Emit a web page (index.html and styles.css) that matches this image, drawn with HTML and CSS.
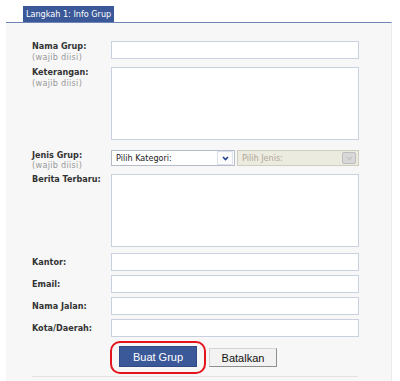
FILE: index.html
```html
<!DOCTYPE html>
<html lang="id">
<head>
    <meta charset="UTF-8">
    <title>Buat Grup - Langkah 1</title>
    <link rel="stylesheet" href="styles.css">
</head>
<body>
    <div class="page">
        <div class="tabs">
            <span class="tab">Langkah 1: Info Grup</span>
        </div>
        <div class="panel">
            <div class="field">
                <div class="label">Nama Grup:<span class="req">(wajib diisi)</span></div>
                <input class="text-input" type="text">
            </div>
            <div class="field field--area">
                <div class="label">Keterangan:<span class="req">(wajib diisi)</span></div>
                <textarea class="text-area"></textarea>
            </div>
            <div class="field field--select">
                <div class="label">Jenis Grup:<span class="req">(wajib diisi)</span></div>
                <div class="selects">
                    <div class="select">
                        <span class="select-text">Pilih Kategori:</span>
                        <span class="select-arrow">
                            <svg width="7" height="5" viewBox="0 0 7 5"><path d="M1 1l2.5 2.5L6 1" fill="none" stroke="#1f3f8f" stroke-width="1.6"/></svg>
                        </span>
                    </div>
                    <div class="select select--disabled">
                        <span class="select-text">Pilih Jenis:</span>
                        <span class="select-arrow">
                            <svg width="7" height="5" viewBox="0 0 7 5"><path d="M1 1l2.5 2.5L6 1" fill="none" stroke="#c4c4c4" stroke-width="1.4"/></svg>
                        </span>
                    </div>
                </div>
            </div>
            <div class="field field--area field--news">
                <div class="label">Berita Terbaru:</div>
                <textarea class="text-area"></textarea>
            </div>
            <div class="field field--single">
                <div class="label">Kantor:</div>
                <input class="text-input" type="text">
            </div>
            <div class="field field--single">
                <div class="label">Email:</div>
                <input class="text-input" type="text">
            </div>
            <div class="field field--single">
                <div class="label">Nama Jalan:</div>
                <input class="text-input" type="text">
            </div>
            <div class="field field--single">
                <div class="label">Kota/Daerah:</div>
                <input class="text-input" type="text">
            </div>
            <div class="actions">
                <span class="highlight">
                    <button class="btn btn-primary" type="button">Buat Grup</button>
                </span>
                <button class="btn btn-cancel" type="button">Batalkan</button>
            </div>
            <div class="panel-foot"></div>
        </div>
    </div>
</body>
</html>
```

FILE: styles.css
```css
body {
    margin: 0;
    background: #fff;
    font-family: "DejaVu Sans Condensed", "DejaVu Sans", sans-serif;
    font-size: 9px;
    color: #333;
}
.page {
    width: 386px;
    padding: 6px 0 0 6px;
}
.tabs {
    padding-left: 17px;
    height: 16px;
}
.tab {
    display: inline-block;
    height: 16px;
    line-height: 16px;
    padding: 0 3px;
    background: #3b5998;
    color: #fff;
    font-size: 9px;
}
.panel {
    border-top: 1px solid #6d84b4;
    border-right: 1px solid #ebebeb;
    background: #f7f7f7;
    padding: 18px 0 0 26px;
    height: 360px;
    box-sizing: border-box;
}
.field {
    display: flex;
    margin-bottom: 4px;
}
.field--area {
    margin-bottom: 8px;
}
.field--news {
    margin-bottom: 6px;
}
.label {
    width: 79px;
    flex: none;
    font-weight: bold;
    line-height: 11px;
    color: #333;
}
.field--single .label {
    line-height: 18px;
}
.req {
    display: block;
    font-weight: normal;
    color: #999;
    letter-spacing: 0.3px;
}
.text-input,
.text-area {
    display: block;
    box-sizing: border-box;
    width: 248px;
    margin: 0;
    padding: 1px 3px;
    border: 1px solid #c9d0df;
    background: #fff;
    font: inherit;
}
.text-input {
    height: 18px;
}
.text-area {
    height: 73px;
    resize: none;
}
.field--select .label {
    padding-top: 2px;
    line-height: 10px;
}
.selects {
    display: flex;
    gap: 2px;
    padding-top: 2px;
}
.select {
    display: flex;
    align-items: center;
    justify-content: space-between;
    box-sizing: border-box;
    width: 124px;
    height: 16px;
    border: 1px solid #b5bcc7;
    background: #fff;
    color: #222;
}
.select-text {
    padding-left: 4px;
}
.select-arrow {
    display: flex;
    align-items: center;
    justify-content: center;
    box-sizing: border-box;
    width: 16px;
    height: 14px;
    margin-right: 1px;
    border: 1px solid #dde3ec;
    background: #fcfcfc;
}
.select--disabled {
    width: 122px;
    background: #ecebdf;
    border-color: #cfcdc0;
    color: #aca899;
}
.select--disabled .select-arrow {
    width: 14px;
    height: 12px;
    margin-right: 2px;
    border: 1px solid #bdbdbd;
    border-radius: 2px;
    background: #d8d8d8;
}
.actions {
    display: flex;
    align-items: center;
    margin: 2px 0 0 78px;
}
.highlight {
    display: inline-block;
    padding: 3px 7px 5px;
    border: 2px solid #e3141b;
    border-radius: 10px;
}
.btn {
    display: block;
    margin: 0;
    font-family: "Liberation Sans", Arial, sans-serif;
    font-size: 11px;
    cursor: pointer;
}
.btn-primary {
    width: 78px;
    height: 21px;
    border: 1px solid #2f4a85;
    background: #3b5998;
    color: #fff;
}
.btn-cancel {
    width: 68px;
    height: 19px;
    margin-left: 3px;
    border: 1px solid #d4d4d4;
    border-right-color: #8e8e8e;
    border-bottom-color: #8e8e8e;
    background: #f2f2f2;
    color: #111;
}
.panel-foot {
    width: 326px;
    margin-top: 2px;
    border-top: 1px solid #e2e2e2;
}
```
